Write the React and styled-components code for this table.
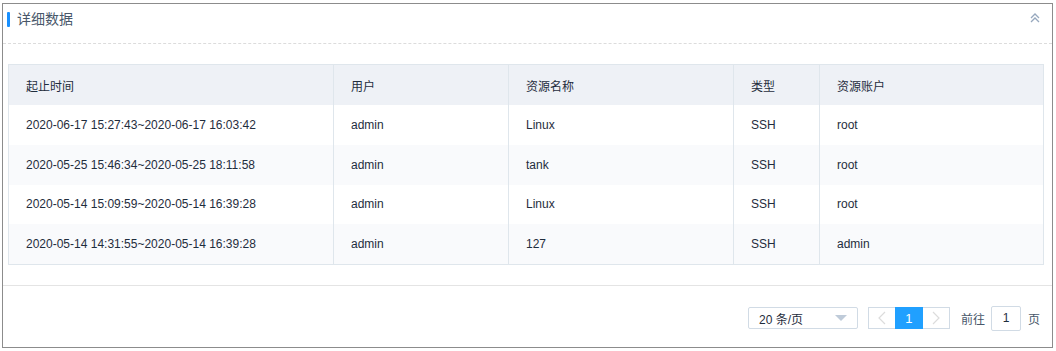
import React from "react";
import styled, { createGlobalStyle } from "styled-components";

const Global = createGlobalStyle`
  html, body { margin: 0; padding: 0; background: #fff; }
  body { font-family: "Liberation Sans", Arial, "Noto Sans CJK SC", sans-serif; color: #1f2d3d; }
  * { box-sizing: border-box; }
`;

const Page = styled.div`
  padding: 3px 3px 0 2px;
  width: 1056px;
`;

const Panel = styled.section`
  width: 1051px;
  height: 345px;
  border: 1px solid #8c8c8c;
  display: flex;
  flex-direction: column;
`;

const Header = styled.div`
  height: 40px;
  border-bottom: 1px dashed #dcdcdc;
  display: flex;
  align-items: flex-start;
  padding: 7px 12px 0 4px;
`;

const TitleBar = styled.span`
  width: 3px;
  height: 15px;
  margin-top: 1px;
  background: #1890ff;
  border-radius: 1px;
`;

const Title = styled.h3`
  margin: 0 0 0 7px;
  font-size: 14px;
  line-height: 17px;
  font-weight: normal;
  color: #48576a;
  flex: 1;
`;

const Collapse = styled.span`
  display: flex;
  margin-top: 2px;
  color: #97a8be;
`;

const Table = styled.div`
  margin: 20px 8px 0 5px;
  border: 1px solid #dfe6ec;
  font-size: 12px;
`;

const Row = styled.div`
  display: grid;
  grid-template-columns: 325px 175px 225px 86px 1fr;
  height: ${(p) => (p.$head ? 40 : 39.75)}px;
  background: ${(p) => (p.$head ? "#eef1f6" : p.$striped ? "#f9fafc" : "#fff")};
`;

const Cell = styled.div`
  display: flex;
  align-items: center;
  padding-left: 17px;
  border-right: 1px solid #dfe6ec;
  color: #1f2d3d;
  white-space: nowrap;
  &:last-child { border-right: none; }
`;

const Footer = styled.div`
  margin-top: 20px;
  border-top: 1px solid #e4e4e4;
  flex: 1;
  display: flex;
  justify-content: flex-end;
  align-items: flex-start;
  padding: 19px 6px 0 0;
`;

const Pager = styled.div`
  display: flex;
  align-items: center;
  height: 26px;
  font-size: 12px;
  color: #48576a;
`;

const Select = styled.div`
  width: 110px;
  height: 22px;
  border: 1px solid #d1dbe5;
  border-radius: 2px;
  display: flex;
  align-items: center;
  padding: 0 10px 0 10px;
  color: #1f2d3d;
  font-size: 12px;
  margin-right: 10px;
  justify-content: space-between;
`;

const Caret = styled.span`
  width: 0;
  height: 0;
  border-left: 6px solid transparent;
  border-right: 6px solid transparent;
  border-top: 6px solid #bfcbd9;
`;

const PageBtn = styled.div`
  width: 28px;
  height: 22px;
  margin-left: ${(p) => (p.$first ? 0 : -1)}px;
  border: 1px solid ${(p) => (p.$active ? "#20a0ff" : "#d1dbe5")};
  background: ${(p) => (p.$active ? "#20a0ff" : "#fff")};
  color: ${(p) => (p.$active ? "#fff" : "#d9d9d9")};
  display: flex;
  align-items: center;
  justify-content: center;
  font-size: 13px;
  position: relative;
  z-index: ${(p) => (p.$active ? 1 : 0)};
`;

const Label = styled.span`
  margin: 0 6px 0 ${(p) => p.$ml || 0}px;
`;

const JumpInput = styled.div`
  width: 30px;
  height: 25px;
  border: 1px solid #d1dbe5;
  border-radius: 2px;
  display: flex;
  align-items: center;
  justify-content: center;
  color: #1f2d3d;
  font-size: 12px;
`;

const Chevron = ({ dir }) => (
  <svg width="8" height="14" viewBox="0 0 8 14">
    <polyline
      points={dir === "left" ? "7,1 1,7 7,13" : "1,1 7,7 1,13"}
      fill="none"
      stroke="#dcdcdc"
      strokeWidth="1.2"
    />
  </svg>
);

const DoubleUp = () => (
  <svg width="10" height="10" viewBox="0 0 10 10">
    <polyline points="1,5 5,1 9,5" fill="none" stroke="currentColor" strokeWidth="1.3" />
    <polyline points="1,9 5,5 9,9" fill="none" stroke="currentColor" strokeWidth="1.3" />
  </svg>
);

const headers = ["起止时间", "用户", "资源名称", "类型", "资源账户"];
const rows = [
  ["2020-06-17 15:27:43~2020-06-17 16:03:42", "admin", "Linux", "SSH", "root"],
  ["2020-05-25 15:46:34~2020-05-25 18:11:58", "admin", "tank", "SSH", "root"],
  ["2020-05-14 15:09:59~2020-05-14 16:39:28", "admin", "Linux", "SSH", "root"],
  ["2020-05-14 14:31:55~2020-05-14 16:39:28", "admin", "127", "SSH", "admin"],
];

export default function App() {
  return (
    <Page>
      <Global />
      <Panel>
        <Header>
          <TitleBar />
          <Title>详细数据</Title>
          <Collapse>
            <DoubleUp />
          </Collapse>
        </Header>
        <Table>
          <Row $head>
            {headers.map((h) => (
              <Cell key={h}>{h}</Cell>
            ))}
          </Row>
          {rows.map((r, i) => (
            <Row key={i} $striped={i % 2 === 1}>
              {r.map((c, j) => (
                <Cell key={j}>{c}</Cell>
              ))}
            </Row>
          ))}
        </Table>
        <Footer>
          <Pager>
            <Select>
              <span>20 条/页</span>
              <Caret />
            </Select>
            <PageBtn $first>
              <Chevron dir="left" />
            </PageBtn>
            <PageBtn $active>1</PageBtn>
            <PageBtn>
              <Chevron dir="right" />
            </PageBtn>
            <Label $ml={11}>前往</Label>
            <JumpInput>1</JumpInput>
            <Label $ml={7}>页</Label>
          </Pager>
        </Footer>
      </Panel>
    </Page>
  );
}
